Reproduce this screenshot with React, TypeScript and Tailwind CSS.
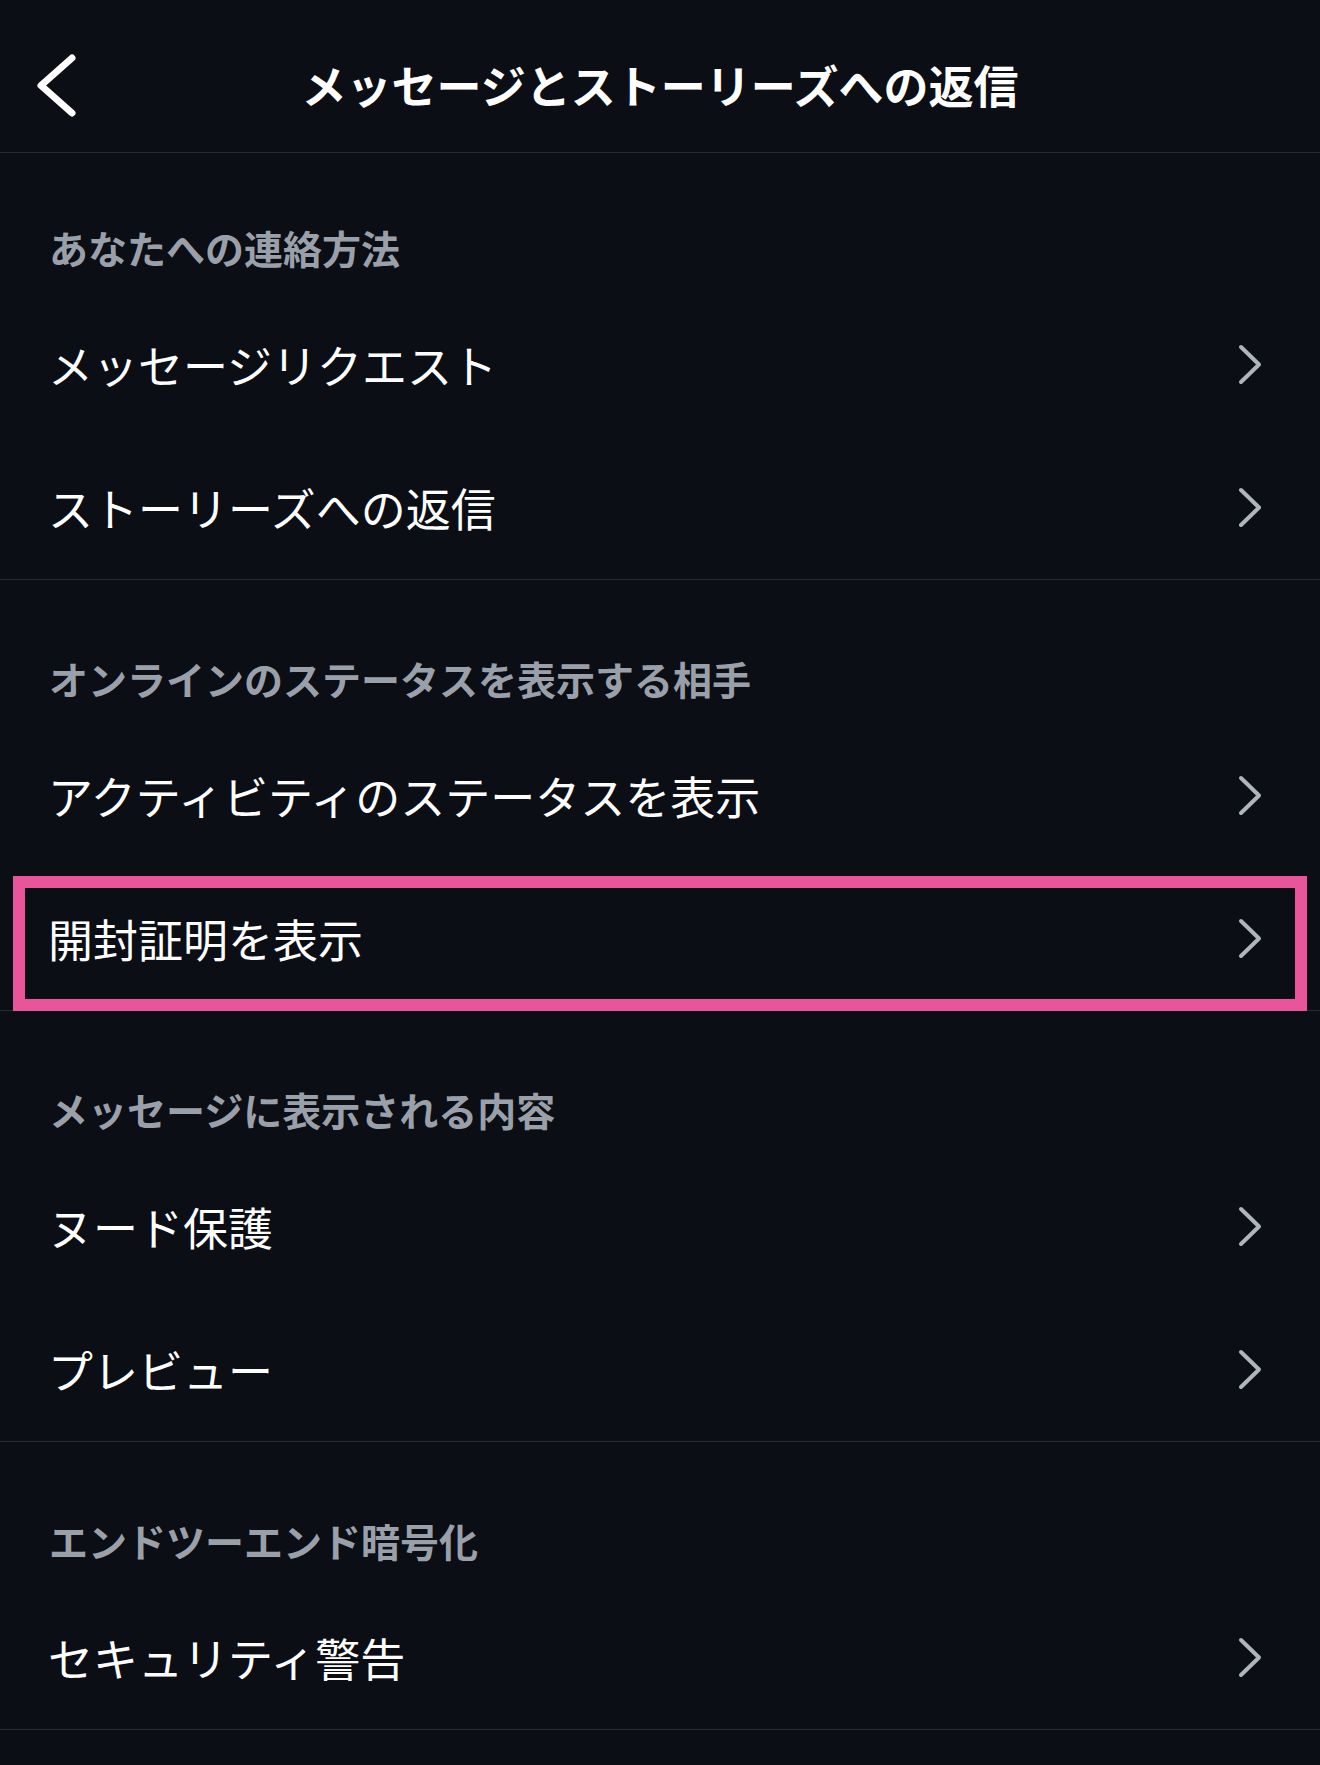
import React from 'react';

type Section = {
  title: string;
  items: string[];
};

const sections: Section[] = [
  { title: 'あなたへの連絡方法', items: ['メッセージリクエスト', 'ストーリーズへの返信'] },
  { title: 'オンラインのステータスを表示する相手', items: ['アクティビティのステータスを表示', '開封証明を表示'] },
  { title: 'メッセージに表示される内容', items: ['ヌード保護', 'プレビュー'] },
  { title: 'エンドツーエンド暗号化', items: ['セキュリティ警告'] },
];

const Chevron = () => (
  <svg width="24" height="41" viewBox="0 0 24 41" fill="none" className="shrink-0">
    <path d="M3 3 L21 20.5 L3 38" stroke="#b0b4bc" strokeWidth="4" strokeLinecap="round" strokeLinejoin="round" />
  </svg>
);

const Row: React.FC<{ label: string; highlighted?: boolean }> = ({ label, highlighted }) => (
  <div className="relative flex h-[143px] items-center justify-between pl-[48px] pr-[58px]">
    <span className="text-[45px] leading-[45px] text-white">{label}</span>
    <Chevron />
    {highlighted && (
      <div className="pointer-events-none absolute top-[9px] bottom-[-1px] left-[13px] right-[13px] border-[12px] border-[#e9559b]" />
    )}
  </div>
);

export default function App() {
  return (
    <div
      className="min-h-[1765px] w-full bg-[#0b0e15]"
      style={{ fontFamily: '"Noto Sans CJK JP", "Noto Sans", sans-serif' }}
    >
      <header className="relative flex h-[153px] items-center justify-center border-b border-[#262a31] pt-[18px]">
        <button className="absolute left-[34px] top-[52px]">
          <svg width="44" height="68" viewBox="0 0 44 68" fill="none">
            <path d="M38 6 L7 33.5 L38 61" stroke="#ffffff" strokeWidth="7" strokeLinecap="round" strokeLinejoin="round" />
          </svg>
        </button>
        <h1 className="text-[45px] font-bold leading-[50px] text-white">メッセージとストーリーズへの返信</h1>
      </header>

      {sections.map((section, si) => (
        <section key={section.title} className="border-b border-[#262a31]">
          <div className={si === 0 ? 'pl-[49px] pt-[72px] pb-[24px]' : 'pl-[49px] pt-[76px] pb-[24px]'}>
            <h2 className="text-[39px] font-bold leading-[44px] text-[#9aa0aa]">{section.title}</h2>
          </div>
          {section.items.map((item, ii) => (
            <Row key={item} label={item} highlighted={si === 1 && ii === 1} />
          ))}
        </section>
      ))}
    </div>
  );
}
